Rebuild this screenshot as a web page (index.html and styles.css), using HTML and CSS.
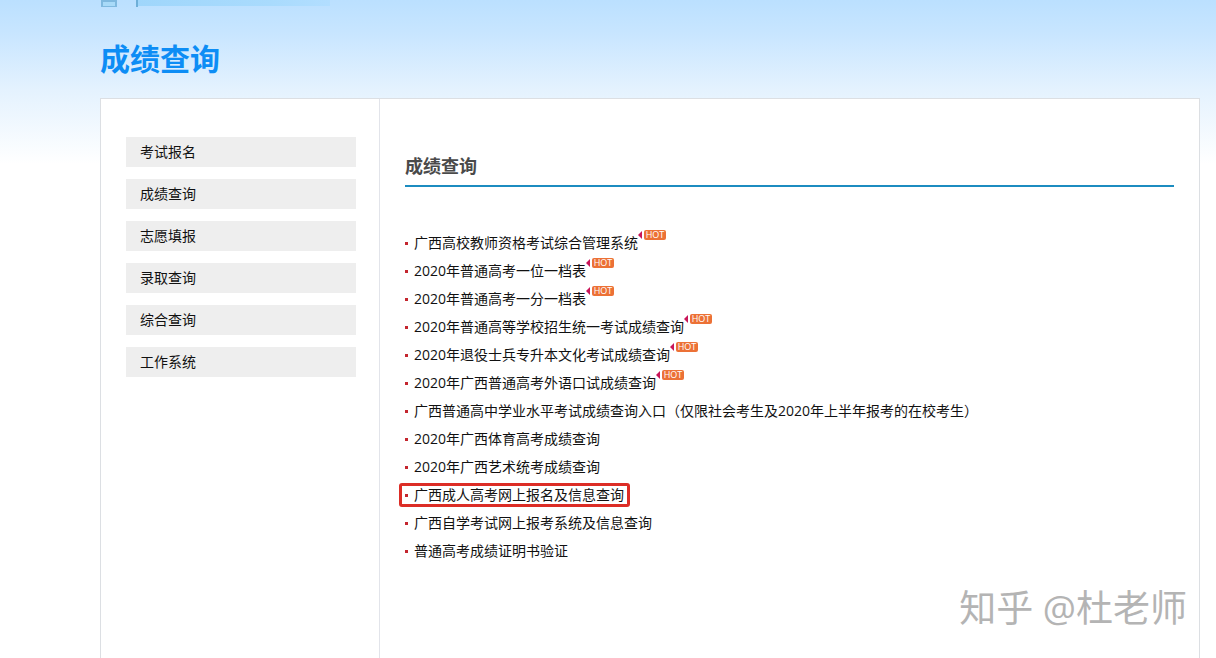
FILE: index.html
```html
<!DOCTYPE html>
<html lang="zh-CN">
<head>
<meta charset="utf-8">
<title>成绩查询</title>
<link rel="stylesheet" href="styles.css">
</head>
<body>
<div class="page">
  <header class="banner">
    <svg class="banner-art" width="230" height="7" viewBox="0 0 230 7" aria-hidden="true">
      <defs><linearGradient id="strip"><stop offset="0" stop-color="#9fd6fb"/><stop offset="0.7" stop-color="#a9dbfd"/><stop offset="1" stop-color="#b2deff"/></linearGradient></defs>
      <path d="M36 0h194v6H36z" fill="url(#strip)"/>
      <path d="M1 0h16v7H1z" fill="#7fb9df"/>
      <path d="M3 2h12v4H3z" fill="#a8daf8"/>
      <path d="M36 0h2v7h-2z" fill="#6eafd8"/>
    </svg>
    <h1 class="page-title">成绩查询</h1>
  </header>
  <div class="panel">
    <nav class="side">
      <a class="side-link" href="#">考试报名</a>
      <a class="side-link" href="#">成绩查询</a>
      <a class="side-link" href="#">志愿填报</a>
      <a class="side-link" href="#">录取查询</a>
      <a class="side-link" href="#">综合查询</a>
      <a class="side-link" href="#">工作系统</a>
    </nav>
    <main class="content">
      <h2 class="section-title">成绩查询</h2>
      <ul class="links">
        <li class="item"><a class="link" href="#">广西高校教师资格考试综合管理系统</a><span class="hot"><span class="hot-label">HOT</span></span></li>
        <li class="item"><a class="link" href="#">2020年普通高考一位一档表</a><span class="hot"><span class="hot-label">HOT</span></span></li>
        <li class="item"><a class="link" href="#">2020年普通高考一分一档表</a><span class="hot"><span class="hot-label">HOT</span></span></li>
        <li class="item"><a class="link" href="#">2020年普通高等学校招生统一考试成绩查询</a><span class="hot"><span class="hot-label">HOT</span></span></li>
        <li class="item"><a class="link" href="#">2020年退役士兵专升本文化考试成绩查询</a><span class="hot"><span class="hot-label">HOT</span></span></li>
        <li class="item"><a class="link" href="#">2020年广西普通高考外语口试成绩查询</a><span class="hot"><span class="hot-label">HOT</span></span></li>
        <li class="item"><a class="link" href="#">广西普通高中学业水平考试成绩查询入口<span class="paren">（</span>仅限社会考生及2020年上半年报考的在校考生<span class="paren">）</span></a></li>
        <li class="item"><a class="link" href="#">2020年广西体育高考成绩查询</a></li>
        <li class="item"><a class="link" href="#">2020年广西艺术统考成绩查询</a></li>
        <li class="item marked"><a class="link" href="#">广西成人高考网上报名及信息查询</a></li>
        <li class="item"><a class="link" href="#">广西自学考试网上报考系统及信息查询</a></li>
        <li class="item"><a class="link" href="#">普通高考成绩证明书验证</a></li>
      </ul>
    </main>
  </div>
  <div class="watermark">知乎 @杜老师</div>
</div>
</body>
</html>
```
FILE: styles.css
```css
*, *::before, *::after { box-sizing: border-box; }

body {
  margin: 0;
  font-family: "Noto Sans CJK SC", sans-serif;
  font-size: 14px;
  color: #111;
  background: #fff;
}

.page {
  position: relative;
  display: flex;
  flex-direction: column;
  min-height: 100vh;
  padding: 0 16px 0 100px;
  background: linear-gradient(#bbe0ff 0, #c9e6ff 36px, #e4f2fe 90px, #fff 164px);
}

.banner { height: 98px; }

.banner-art { display: block; }

.page-title {
  margin: 28px 0 0;
  font-size: 30px;
  line-height: 44px;
  font-weight: 700;
  color: #0d8df5;
}

.panel {
  flex: 1;
  display: flex;
  border: 1px solid #dcdfe3;
  border-bottom: 0;
  background: #fff;
}

.side {
  display: flex;
  flex-direction: column;
  gap: 12px;
  flex: 0 0 279px;
  padding: 38px 23px 0 25px;
  border-right: 1px solid #e2e4ea;
}

.side-link {
  padding: 0 0 2px 14px;
  line-height: 28px;
  color: #111;
  text-decoration: none;
  background: #eee;
}

.content {
  flex: 1;
  min-width: 0;
  padding: 50px 25px 0;
}

.section-title {
  margin: 0;
  padding-bottom: 4px;
  border-bottom: 2px solid #1c8cc0;
  font-size: 18px;
  line-height: 32px;
  font-weight: 700;
  color: #4a4a4a;
}

.links {
  margin: 42px 0 0;
  padding: 0;
  list-style: none;
}

.item {
  position: relative;
  display: flex;
  align-items: flex-start;
  line-height: 28px;
}

.item::before {
  content: "";
  flex: none;
  width: 3px;
  height: 3px;
  margin: 13px 6px 0 0;
  background: #c4262e;
}

.link {
  font-family: "Open Sans", "Noto Sans CJK SC", sans-serif;
  color: #111;
  text-decoration: none;
}

.paren {
  font-family: "Noto Sans CJK TC", sans-serif;
  line-height: 1;
}

.hot {
  display: flex;
  align-items: center;
  flex: none;
  height: 11px;
}

.hot::before {
  content: "";
  border: solid transparent;
  border-width: 4px 4px 4px 0;
  border-right-color: #c9165a;
}

.hot-label {
  width: 22px;
  height: 10px;
  margin-left: 2px;
  border-radius: 2px;
  background: #ec7136;
  color: #fff;
  font-family: "Open Sans", sans-serif;
  font-size: 9px;
  line-height: 10px;
  text-align: center;
}

.marked::after {
  content: "";
  position: absolute;
  left: -6px;
  top: 2px;
  width: 231px;
  height: 24px;
  border: 3px solid #dc2d26;
  border-radius: 3px;
}

.watermark {
  position: absolute;
  right: 29px;
  bottom: 22px;
  font-family: "Open Sans", "Noto Sans CJK SC", sans-serif;
  font-size: 37px;
  line-height: 56px;
  font-weight: 400;
  color: #b4b4b4;
  text-shadow: -1px -1px 0 #fff;
}
```
